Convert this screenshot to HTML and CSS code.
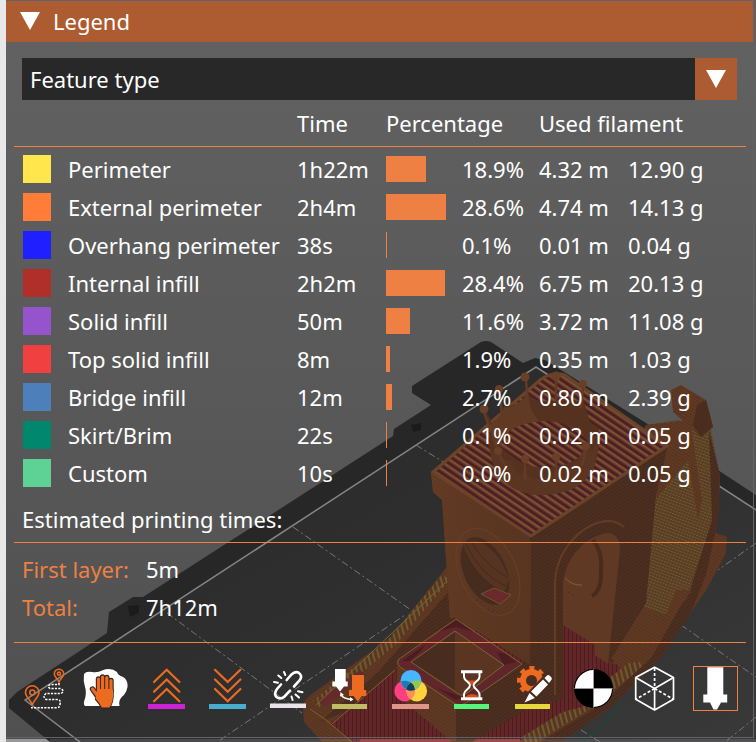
FILE: index.html
```html
<!DOCTYPE html>
<html lang="en">
<head>
<meta charset="utf-8">
<meta name="viewport" content="width=device-width, initial-scale=1">
<title>Legend</title>
<link rel="stylesheet" href="styles.css">
</head>
<body>
<div class="app">
  <svg class="scene" viewBox="6 0 750 742" preserveAspectRatio="xMinYMin slice" aria-hidden="true">
    <defs>
      <linearGradient id="sky" x1="0" y1="0" x2="0" y2="1">
        <stop offset="0" stop-color="#626262"/><stop offset="1" stop-color="#505050"/>
      </linearGradient>
      <linearGradient id="bed" x1="0" y1="0" x2="1" y2="1">
        <stop offset="0" stop-color="#292929"/><stop offset=".5" stop-color="#2e2e2e"/><stop offset="1" stop-color="#393939"/>
      </linearGradient>
      <linearGradient id="wallShade" x1="0" y1="0" x2="1" y2="0">
        <stop offset="0" stop-color="#6a3e25" stop-opacity=".5"/><stop offset="1" stop-color="#4f301f" stop-opacity=".3"/>
      </linearGradient>
      <pattern id="roofLines" width="12" height="6" patternUnits="userSpaceOnUse" patternTransform="rotate(34)">
        <rect width="12" height="6" fill="#6b2a2d"/><rect width="12" height="2" fill="#452020"/><rect width="12" height="1.500" y="3" fill="#736130"/>
      </pattern>
      <pattern id="deckLines" width="4" height="8" patternUnits="userSpaceOnUse">
        <rect width="4" height="8" fill="#622629"/><rect width="1" height="8" fill="#491d20"/>
      </pattern>
      <pattern id="wallLines" width="8" height="3" patternUnits="userSpaceOnUse" patternTransform="rotate(32)">
        <rect width="8" height="3" fill="#5f3923"/><rect width="8" height="1" fill="#563320"/>
      </pattern>
      <pattern id="shadeLines" width="8" height="3" patternUnits="userSpaceOnUse" patternTransform="rotate(-32)">
        <rect width="8" height="3" fill="#4d2f20"/><rect width="8" height="1" fill="#43291d"/>
      </pattern>
      <pattern id="mesh" width="3" height="3" patternUnits="userSpaceOnUse" patternTransform="rotate(20)">
        <rect width="3" height="3" fill="#5c3c25"/><rect width="2" height="1" fill="#67622e"/>
      </pattern>
      <pattern id="rail" width="5" height="5" patternUnits="userSpaceOnUse" patternTransform="rotate(-15)">
        <rect width="5" height="5" fill="#5b3522"/><rect width="2" height="5" fill="#6a5c2e"/>
      </pattern>
    </defs>
    <rect x="0" width="756" height="742" fill="url(#sky)"/>
    <path fill="#272727" d="M9 700 17 692 66 660 107 633 109 612 133 597H143L252 527 393 436 394 429 431 405 412 393V386L481 342Q486 340 491 342L523 363 535 358 545 360 646 423 756 495V742H50L9 708Z"/>
    <path fill="url(#bed)" d="M25 700 536 367 756 510V742H80Z"/>
    <path fill="none" stroke="#858585" stroke-width="1.500" d="M80 742 25 700 536 367 756 510"/>
    <path fill="#1b1b1b" d="M128 606 139 605V613L130 617ZM411 425 421 423V430L413 432Z"/>
    <path fill="none" stroke="#777" stroke-dasharray="7 3 2 3" d="M167 613 302 713M293 527 411 610M220 740 405 615M416 445 445 463M681 625 756 677M756 543 718 570M740 500 756 510M581 730 600 742M756 717 725 742"/>
    <path fill="none" stroke="#17483f" stroke-width="1.300" d="M620 702Q609 724 580 742"/>
    <!-- hull -->
    <path fill="url(#wallLines)" d="M303 708Q303 700 312 694L390 638 446 568 470 560 660 500 718 517 711 560 688 617 661 657 611 707 561 742H322L304 722Z"/>
    <path fill="url(#shadeLines)" d="M378 672 450 590 470 640 400 690 320 722Z"/>
    <path fill="none" stroke="url(#rail)" stroke-width="9" d="M316 704 392 642 446 577"/>
    <path fill="#652a2b" d="M318 701 360 670 366 675 326 706Z"/>
    <path fill="url(#deckLines)" d="M330 724 395 670 450 640 560 600 620 668 608 700 520 742H352Z"/>
    <path fill="none" stroke="#776630" d="M310 709 326 720 352 742M332 724 395 670M316 705 446 582"/>
    <path fill="#8c3330" d="M360 739H520V742H360Z"/>
    <path fill="url(#wallLines)" d="M397 665 456 703V742H452L396 694Z"/>
    <path fill="url(#shadeLines)" d="M456 703 522 664 530 650 563 690 540 701 472 742H456Z"/>
    <path fill="none" stroke="url(#rail)" stroke-width="12" d="M525 742 580 708 640 662"/>
    <path fill="url(#shadeLines)" d="M651 658 718 540 711 565 688 617 661 657 611 707 561 742H540L600 705Z"/>
    <path fill="url(#wallLines)" d="M713 532 727 537 726 553 708 587 688 617 700 580Z"/>
    <!-- stern -->
    <path fill="url(#mesh)" d="M646 425 678 420 711 430 720 477 718 517 700 590 664 615 640 610 620 480Z"/>
    <path fill="url(#wallLines)" d="M646 425 690 420 702 500 698 520 688 460 655 500Z"/>
    <path fill="url(#shadeLines)" d="M709 430 720 475 718 520 706 575 690 615 661 657 690 590 712 520Z"/>
    <path fill="url(#wallLines)" d="M641 605 666 616 676 590 692 590 640 662 612 664Z"/>
    <!-- cabin -->
    <path fill="url(#wallLines)" d="M431 473 433 492 442 500 450 618 456 618 530 665V520Z"/>
    <path fill="url(#wallShade)" d="M431 473 433 492 442 500 450 618 456 618 530 665V520Z"/>
    <path fill="url(#shadeLines)" d="M531 530 668 445 656 495 646 603 608 664 563 700 530 705Z"/>
    <path fill="url(#roofLines)" stroke="#6b4329" stroke-width="3" d="M433 472 540 380Q552 371 565 375L667 446 531 536Z"/>
    <!-- chimney -->
    <path fill="url(#wallLines)" d="M671 390 681 385 706 400 713 427 701 437 673 412Z"/>
    <path fill="#4b2d1f" d="M697 405 706 400 713 427 701 437 693 425Z"/>
    <!-- arch and windows -->
    <path fill="none" stroke="#643c26" stroke-width="2" d="M555 695V582C557 545 588 520 610 521Q618 522 624 527"/>
    <path fill="#603924" d="M563 700V585C565 550 596 532 610 533Q620 536 620 550L608 664Z"/>
    <path fill="url(#deckLines)" d="M563 625 595 645V655L608 664V700L563 712Z"/>
    <path fill="none" stroke="#482b1e" stroke-width="4" d="M593 540Q603 552 601 570 602 590 592 596"/>
    <path fill="none" stroke="#776630" d="M565 578Q573 586 582 585"/>
    <ellipse cx="488" cy="572" rx="28" ry="46" transform="rotate(-25 488 572)" fill="none" stroke="#6a3f27"/>
    <ellipse cx="485" cy="571" rx="21" ry="36" transform="rotate(-25 485 571)" fill="#462c1f"/>
    <path fill="#563421" d="M462 542Q474 578 504 592L509 580Q500 550 477 541Z"/>
    <path fill="none" stroke="#422a1e" d="M466 544Q480 575 506 586M472 543Q486 566 507 577M468 560Q482 582 499 590"/>
    <path fill="#6a2a2c" stroke="#776630" stroke-width=".7" d="M481 594 494 588 511 595 500 604Z"/>
    <!-- hatch -->
    <path fill="#60262a" stroke="#776630" d="M399 659 456 619 522 664 466 703Q459 707 452 702L400 667Q396 663 399 659Z"/>
    <path fill="#4a1d21" d="M440 631 456 620 472 631 456 627ZM402 661 425 645 420 652 410 661ZM497 652 506 654 516 662 504 665ZM437 688 456 700 476 691 462 697Z"/>
    <path fill="#5a3622" stroke="#776630" d="M411 662 455 631 504 665 466 694Q462 697 457 693Z"/>
    <path fill="#482c1f" d="M412 662 455 632V690Z"/>
    <!-- crown -->
    <path fill="#54321f" d="M487 412 492 424Q501 420 504 406 518 408 527 393L534 400 553 402 562 398 584 402 590 422 599 428 598 448Q592 495 538 495 500 493 490 452Z"/>
    <path fill="#613a24" d="M489 425Q500 420 504 407 514 410 528 393 530 418 545 424 515 430 495 448Z"/>
    <path fill="url(#roofLines)" d="M500 446Q506 423 545 421 578 423 588 442 584 460 560 466 525 474 500 446Z"/>
    <path fill="#5a3622" d="M489 445Q498 462 511 460 516 478 525 473 539 486 554 472 578 470 584 446L592 451 599 440Q598 496 538 495 494 492 489 445Z"/>
    <path fill="none" stroke="#633b25" stroke-width="2.500" d="M484 412 491 432M499 391 502 414M526 380 528 405M556 378V402M583 387 581 408M498 453 508 470M525 461V480M556 458V478M586 447 582 466"/>
    <g fill="#6a3f27"><circle cx="484" cy="409" r="4.500"/><circle cx="499" cy="389" r="4"/><circle cx="525" cy="377" r="4.500"/><circle cx="556" cy="376" r="4.500"/><circle cx="583" cy="384" r="4"/><circle cx="498" cy="451" r="4"/><circle cx="525" cy="459" r="4"/><circle cx="556" cy="457" r="4"/><circle cx="586" cy="446" r="4"/></g>
    <path fill="none" stroke="#28285e" stroke-dasharray="1 4" d="M476 600 496 614M590 538 602 533M685 417 704 437M568 592 575 597"/>
    <!-- uncovered strip under the panel -->
    <path fill="#989898" d="M6 739H46L50 742H6Z"/>
    <path fill="#fff" opacity=".12" d="M50 739H756V742H50Z"/>
  </svg>

  <main class="legend">
    <h1 class="title">
      <button class="title-button" type="button">
        <svg class="triangle" viewBox="0 0 20 18" aria-hidden="true"><path d="M0 0H20L10 18Z"/></svg>
        <span>Legend</span>
      </button>
    </h1>

    <div class="content">
      <div class="picker">
        <select class="picker-select" aria-label="View type"><option>Feature type</option></select>
        <span class="picker-arrow"><svg class="triangle" viewBox="0 0 20 18" aria-hidden="true"><path d="M0 0H20L10 18Z"/></svg></span>
      </div>

      <table class="features">
        <colgroup><col class="col-swatch"><col class="col-name"><col class="col-time"><col class="col-bar"><col class="col-percent"><col class="col-length"><col></colgroup>
        <thead><tr><td colspan="2"></td><th scope="col">Time</th><th scope="col" colspan="2">Percentage</th><th scope="col" colspan="2">Used filament</th></tr></thead>
        <tbody>
          <tr><td><span class="swatch perimeter"></span></td><td>Perimeter</td><td>1h22m</td><td><span class="bar" style="width:40px"></span></td><td>18.9%</td><td>4.32 m</td><td>12.90 g</td></tr>
          <tr><td><span class="swatch external"></span></td><td>External perimeter</td><td>2h4m</td><td><span class="bar" style="width:60px"></span></td><td>28.6%</td><td>4.74 m</td><td>14.13 g</td></tr>
          <tr><td><span class="swatch overhang"></span></td><td>Overhang perimeter</td><td>38s</td><td><span class="bar" style="width:1px"></span></td><td>0.1%</td><td>0.01 m</td><td>0.04 g</td></tr>
          <tr><td><span class="swatch internal"></span></td><td>Internal infill</td><td>2h2m</td><td><span class="bar" style="width:59px"></span></td><td>28.4%</td><td>6.75 m</td><td>20.13 g</td></tr>
          <tr><td><span class="swatch solid"></span></td><td>Solid infill</td><td>50m</td><td><span class="bar" style="width:24px"></span></td><td>11.6%</td><td>3.72 m</td><td>11.08 g</td></tr>
          <tr><td><span class="swatch top"></span></td><td>Top solid infill</td><td>8m</td><td><span class="bar" style="width:4px"></span></td><td>1.9%</td><td>0.35 m</td><td>1.03 g</td></tr>
          <tr><td><span class="swatch bridge"></span></td><td>Bridge infill</td><td>12m</td><td><span class="bar" style="width:6px"></span></td><td>2.7%</td><td>0.80 m</td><td>2.39 g</td></tr>
          <tr><td><span class="swatch skirt"></span></td><td>Skirt/Brim</td><td>22s</td><td><span class="bar" style="width:1px"></span></td><td>0.1%</td><td>0.02 m</td><td>0.05 g</td></tr>
          <tr><td><span class="swatch custom"></span></td><td>Custom</td><td>10s</td><td><span class="bar" style="width:1px"></span></td><td>0.0%</td><td>0.02 m</td><td>0.05 g</td></tr>
        </tbody>
      </table>

      <h2 class="times-title">Estimated printing times:</h2>
      <dl class="times">
        <dt>First layer:</dt><dd>5m</dd>
        <dt>Total:</dt><dd>7h12m</dd>
      </dl>

      <div class="tools">
        <button class="tool" type="button" aria-label="Travel">
          <svg viewBox="0 0 45 45"><g fill="none" stroke="#ed6b21" stroke-width="1.600"><path d="M10.300 39C9 34 3.500 31 3.500 26.500A6.700 6.700 0 0 1 17 26.500C17 31 11.500 34 10.300 39Z"/><circle cx="10.300" cy="26.500" r="2.500"/><path d="M37 16C36 13 32.300 11 32.300 8A4.700 4.700 0 0 1 41.700 8C41.700 11 38 13 37 16Z"/><circle cx="37" cy="7.700" r="1.600"/></g><path fill="none" stroke="#fff" stroke-width="1.500" stroke-dasharray="2.200 1.200" d="M37 17V18.500H28Q25 20.500 28 22.500H39Q43 25 39 27.500H24Q20 30.500 24 33.500H35Q39.500 34 38 38 38 41.700 35 41.700H9"/></svg>
        </button>
        <button class="tool" type="button" aria-label="Wipe">
          <svg viewBox="0 0 45 45"><path fill="#fff" d="M1 8Q3 5 9 6 15 7 19 4.500 28 1 34 6 35 9 39 10.500 45 13 44.600 20.500 44 25 41 29 35 33 36.500 40H2Q0 38 1.500 34 4 27 2 21 0 15 1 8Z"/><g stroke-linecap="round" stroke-linejoin="round"><path fill="#ed6b21" stroke="#33251d" stroke-width="3.400" d="M15 24H29V31Q29 36 26 41H19.500Q17 37 13.500 33Z"/><path fill="none" stroke="#33251d" stroke-width="5.400" d="M15.500 25V13M19.600 25V11M23.800 25V11.500M28 25V14.500M9.500 23 15 31"/><path fill="none" stroke="#ed6b21" stroke-width="3.200" d="M15.500 26V13M19.600 26V11M23.800 26V11.500M28 27V14.500M9.500 23 15.500 31"/><path fill="#ed6b21" stroke="#ed6b21" stroke-width="2" d="M15 24H29V31Q29 36 26 40.500H19.500Q17 36 13.500 32Z"/></g></svg>
        </button>
        <button class="tool" type="button" aria-label="Retractions">
          <svg viewBox="0 0 45 45"><path fill="none" stroke="#ed6b21" stroke-width="2.200" stroke-linecap="round" d="M10 16 22.700 3.800 35.400 16M10 25.700 22.700 13.500 35.400 25.700M10 35.300 22.700 23 35.400 35.300"/><path fill="#cc22d6" d="M4 38H41V43H4Z"/></svg>
        </button>
        <button class="tool" type="button" aria-label="Deretractions">
          <svg viewBox="0 0 45 45"><path fill="none" stroke="#ed6b21" stroke-width="2.200" stroke-linecap="round" d="M10 3.800 22.700 16 35.400 3.800M10 13.500 22.700 25.700 35.400 13.500M10 23 22.700 35.300 35.400 23"/><path fill="#49adcf" d="M4 38H41V43H4Z"/></svg>
        </button>
        <button class="tool" type="button" aria-label="Seams">
          <svg viewBox="0 0 45 45"><g fill="none" stroke="#fff" stroke-width="2.600" stroke-linecap="round"><path d="M20.700 14 25.500 8.500Q30.500 4 34 8 36.500 11 33.500 14.500L28 20.500M15 18.500 11 23Q7.500 28 10.500 31 14.500 34 18.500 30.500L24 24.700"/><path stroke-width="2" d="M18 6 19.300 9M12.300 9.500 15.300 12M8 16 12 16.800M32 25.300 36.500 26.300M29.500 28.500 33 31.600M25.500 30.500 26.600 34"/></g><path fill="#eae3e9" d="M4 37.500H40V42H4Z"/></svg>
        </button>
        <button class="tool" type="button" aria-label="Tool changes">
          <svg viewBox="0 0 45 45"><path fill="#fff" d="M8 3H18.700V15.500H20.700V20.500H17L13 25.500 9 20.500H5.300V15.500H8Z"/><path fill="#ed6b21" d="M25 9H37V24H39.300V30H35L30.700 35.500 26.500 30H22V24H25Z"/><path fill="none" stroke="#fff" stroke-width="1.400" d="M14 29Q17 33 25 33.500"/><path fill="#fff" d="M13.500 26 17 29 13 30.500ZM26.500 33.500 23 31V35.500Z"/><path fill="#c1bd64" d="M5 38H40V43H5Z"/></svg>
        </button>
        <button class="tool" type="button" aria-label="Color changes">
          <svg viewBox="0 0 45 45"><circle cx="16.700" cy="25" r="10.400" fill="#ff3f80"/><circle cx="28.700" cy="25" r="10.400" fill="#ffd23e"/><circle cx="23" cy="14.300" r="10.400" fill="#47b5ff"/><path fill="#ff8d5f" d="M22.700 16.500A10.400 10.400 0 0 1 22.700 33.500 10.400 10.400 0 0 1 22.700 16.500Z"/><path fill="#1e7ab0" d="M13 15.400A10.400 10.400 0 0 1 26.500 21.500L22.500 24.700A10.400 10.400 0 0 1 13 15.400Z"/><path fill="#90c94e" d="M33 15A10.400 10.400 0 0 1 22.700 24.700L19 21.500A10.400 10.400 0 0 1 33 15Z"/><path fill="#113d5e" d="M22.700 16.500Q26 18.500 27 23.800 22.700 26 18.500 23.500 19 19 22.700 16.500Z"/><path fill="#dd9688" d="M4 38H41V43H4Z"/></svg>
        </button>
        <button class="tool" type="button" aria-label="Pause prints">
          <svg viewBox="0 0 45 45"><path fill="#df4b14" d="M18 14.500H28L22.700 19ZM16 31Q22.700 25 30 31Z"/><path fill="none" stroke="#fff" stroke-width="2" d="M15 7V11C15 15 21 16 21 19.300 21 23 15 24 15 28V32M30.500 7V11C30.500 15 24.500 16 24.500 19.300 24.500 23 30.500 24 30.500 28V32"/><path fill="#fff" d="M12 4.300H33.300V7.300H12ZM12 31.300H33.300V34.300H12Z"/><path fill="#55f47a" d="M5 38H40V43H5Z"/></svg>
        </button>
        <button class="tool" type="button" aria-label="Custom G-codes">
          <svg viewBox="0 0 45 45"><circle cx="21.500" cy="14.500" r="8.500" fill="none" stroke="#ed6b21" stroke-width="6"/><circle cx="21.500" cy="14.500" r="12.500" fill="none" stroke="#ed6b21" stroke-width="4" stroke-dasharray="5 4.817" stroke-dashoffset="2.500"/><path fill="#4b2b20" d="M17 27 36 7 44 14 22 37H14Z"/><path fill="#fff" d="M21 25.500 33 13.500 38 18.500 26.500 30.500ZM34.500 12 37 9.500Q38.500 8.500 40 10L41.500 11.500Q42.500 13 41 14.500L39 17ZM19.500 27 25 32 14.500 36.500Z"/><path fill="#e5d83c" d="M5 38H40V43H5Z"/></svg>
        </button>
        <button class="tool" type="button" aria-label="Center of gravity">
          <svg viewBox="0 0 45 45"><circle cx="22.500" cy="22.500" r="19.500" fill="#000"/><path fill="#fff" d="M22.500 22.500V4A18.500 18.500 0 0 0 4 22.500ZM22.500 22.500V41A18.500 18.500 0 0 0 41 22.500Z"/><path fill="none" stroke="#aaa" stroke-width=".6" d="M22.500 3V42M3 22.500H42"/></svg>
        </button>
        <button class="tool" type="button" aria-label="Shells">
          <svg viewBox="0 0 45 45"><g fill="none" stroke="#fff" stroke-width="1.700" stroke-linejoin="round"><path d="M22.600 1.300 41.500 11.500V33.300L22.600 44 3.700 33.300V11.500ZM3.700 11.500 22.600 22.600 41.500 11.500M22.600 22.600V44"/><path stroke-dasharray="3 2" d="M22.600 2V22.600M22.600 22.600 3.700 33.300M22.600 22.600 41.500 33.300"/></g></svg>
        </button>
        <button class="tool selected" type="button" aria-label="Tool marker" aria-pressed="true">
          <svg viewBox="0 0 45 45"><path fill="#fff" d="M14.300 1.300H30.300V28.500H34.200V36.500H28L24 43.500H20.500L17 36.500H10.300V28.500H14.300Z"/></svg>
        </button>
      </div>
    </div>
  </main>
</div>
</body>
</html>
```
FILE: styles.css
```css
* { box-sizing: border-box; }

:root {
  --accent: #ed8042;
  --accent-dark: #ac5c30;
  --line: 38px;
}

body {
  margin: 0;
  background: #505050;
  color: #fff;
  font: 22px/38px "Noto Sans", sans-serif;
}

.app {
  position: relative;
  min-height: 100vh;
  padding-right: 2px;
  border-left: 6px solid #e8e8e8;
  overflow: hidden;
}

.scene {
  position: absolute;
  inset: 0;
  width: 100%;
  height: 100%;
}

.legend {
  position: relative;
  border: 1px solid #62626c;
  border-width: 1px 1px 1px 0;
}

.title, .times-title { margin: 0; font: inherit; }

.title-button {
  display: flex;
  align-items: center;
  gap: 13px;
  width: 100%;
  height: 41px;
  padding: 0 14px 2px;
  border: 0;
  background: var(--accent-dark);
  color: inherit;
  font: inherit;
}

.triangle { display: block; width: 20px; height: 18px; fill: #fff; }

.content { padding: 16px 7px 26px 8px; }

.picker { display: flex; position: relative; margin: 0 9px 0 8px; }

.picker-select {
  flex: 1;
  height: 42px;
  padding: 0 50px 0 8px;
  border: 0;
  border-radius: 0;
  appearance: none;
  background: #282828;
  color: inherit;
  font: inherit;
}

.picker-arrow {
  position: absolute;
  inset: 0 0 0 auto;
  display: grid;
  place-items: center;
  width: 42px;
  background: var(--accent-dark);
  pointer-events: none;
}

.features {
  width: 100%;
  table-layout: fixed;
  border-collapse: separate;
  border-spacing: 0;
}

.col-swatch { width: 54px; }
.col-name { width: 229px; }
.col-time, .col-length { width: 89px; }
.col-bar { width: 76px; }
.col-percent { width: 77px; }

.features th, .features td {
  height: var(--line);
  padding: 0;
  font-weight: 400;
  text-align: left;
  white-space: nowrap;
}

.features thead th, .features thead td {
  height: 47px;
  border-bottom: 1px solid var(--accent);
}

.features tbody::before { content: ""; display: table-row; height: 3px; }

.swatch { display: block; width: 28px; height: 28px; margin-left: 9px; }
.perimeter { background: #ffe64d; }
.external { background: #ff7d38; }
.overhang { background: #1f1fff; }
.internal { background: #b03029; }
.solid { background: #9654cc; }
.top { background: #f04040; }
.bridge { background: #4d80ba; }
.skirt { background: #00876e; }
.custom { background: #5ed194; }

.bar { display: block; height: 26px; background: var(--accent); }

.times-title {
  padding: 8px 8px 4px;
  border-bottom: 1px solid var(--accent);
}

.times {
  display: grid;
  grid-template-columns: max-content 1fr;
  column-gap: 17px;
  margin: 0;
  padding: 7px 8px 16px;
  border-bottom: 1px solid var(--accent);
}

.times dt { color: var(--accent); }
.times dd { margin: 0; }

.tools {
  display: flex;
  flex-wrap: wrap;
  justify-content: space-between;
  margin: 23px 8px 0;
}

.tool {
  width: 45px;
  height: 45px;
  padding: 0;
  border: 0;
  background: none;
}

.tool svg { display: block; width: 45px; height: 45px; }

.selected { outline: 1px solid var(--accent); outline-offset: -1px; }
```
